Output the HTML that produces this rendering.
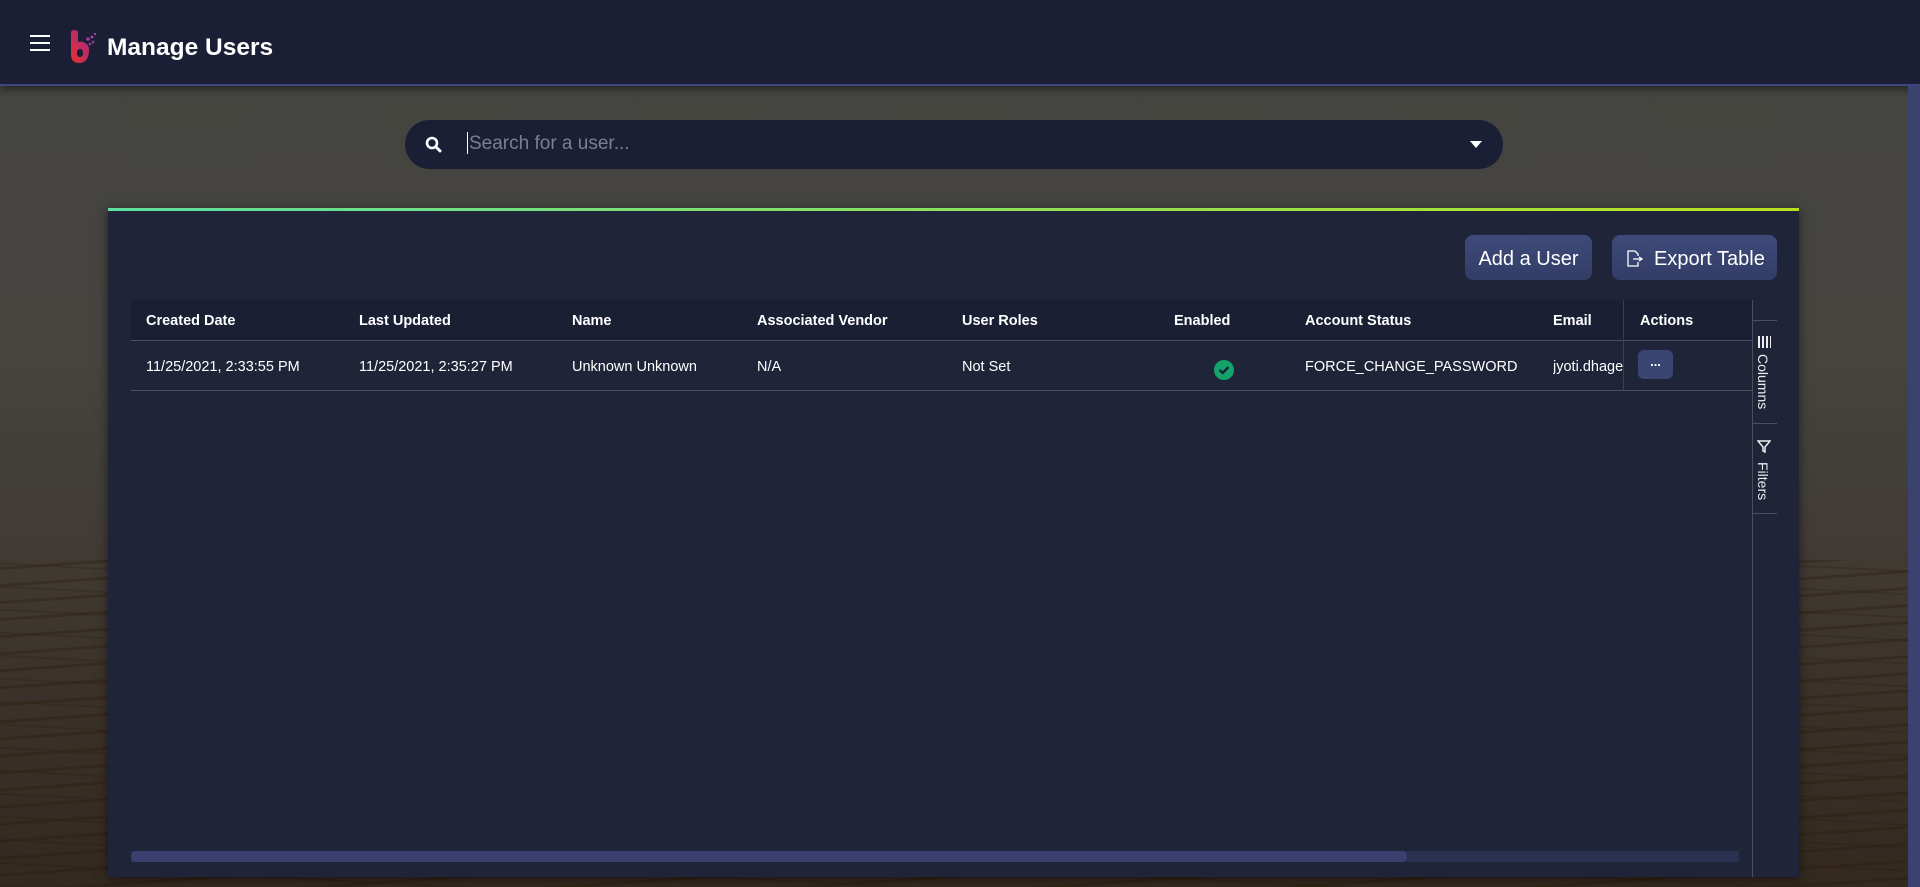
<!DOCTYPE html>
<html><head><meta charset="utf-8"><style>
*{box-sizing:border-box;margin:0;padding:0}
body{width:1920px;height:887px;overflow:hidden;font-family:"Liberation Sans",sans-serif;color:#fff;position:relative;
background:linear-gradient(180deg,#454541 0%,#45443f 40%,#413c35 60%,#3a3129 80%,#33291f 100%);}
.tex{position:absolute;left:0;top:560px;width:1920px;height:327px;opacity:.7;background:repeating-linear-gradient(176deg,rgba(40,25,10,0) 0 7px,rgba(45,28,12,.5) 7px 10px,rgba(0,0,0,0) 10px 17px),repeating-linear-gradient(183deg,rgba(40,25,10,0) 0 11px,rgba(45,28,12,.35) 11px 13px,rgba(0,0,0,0) 13px 23px);}
.hdr{position:absolute;left:0;top:0;width:1920px;height:86px;background:#1b1f35;border-bottom:2px solid #3a4782;box-shadow:0 3px 8px rgba(0,0,0,.5)}
.rbar{position:absolute;right:0;top:86px;width:12px;height:801px;background:#3b4270}
.search{position:absolute;left:405px;top:120px;width:1098px;height:49px;border-radius:25px;background:#1b1f35}
.card{position:absolute;left:108px;top:208px;width:1691px;height:669px;background:#1f2439;box-shadow:0 2px 10px rgba(0,0,0,.5)}
.card:before{content:"";position:absolute;left:0;top:0;width:100%;height:3px;background:linear-gradient(90deg,#5ee0a0,#b9e21e)}
.btn{position:absolute;top:27px;height:45px;border-radius:8px;background:linear-gradient(180deg,#3e4a7a,#323d66);font-size:20px;line-height:49px;color:#fff;white-space:nowrap}
.th{position:absolute;top:300px;height:41px;left:131px;width:1621px;background:#1b1f33;border-bottom:1px solid #4a4e5e}
.tr{position:absolute;top:341px;height:50px;left:131px;width:1621px;border-bottom:1px solid #4a4e5e}
.c{position:absolute;font-size:14.5px;white-space:nowrap}
.th .c{font-weight:bold;top:13px}
.tr .c{top:18px}
.vt{position:absolute;writing-mode:vertical-rl;font-size:14px;color:#eee}
</style></head><body>
<div class="tex"></div>
<div class="hdr">
 <div style="position:absolute;left:30px;top:35px;width:20px;height:2px;background:#fff;box-shadow:0 7px 0 #fff,0 14px 0 #fff"></div>
 <svg style="position:absolute;left:68px;top:30px" width="30" height="35" viewBox="0 0 30 35"><defs><linearGradient id="g" x1="0" y1="1" x2="1" y2="0"><stop offset="0" stop-color="#e8302c"/><stop offset="1" stop-color="#9a2a8c"/></linearGradient></defs><path d="M3 3 Q3 0 6.5 0 Q10 0 10 3 L10 12 Q12 11 15 12 Q22 14 21 22 Q20 33 11 33 Q3 33 3 24 Z M12 19 Q9 19 9 23 Q9 27 12 27 Q15 27 15 23 Q15 19 12 19Z" fill="url(#g)"/><circle cx="20" cy="9" r="1.8" fill="#a33a9a"/><circle cx="24" cy="7" r="1.4" fill="#b04aa8"/><circle cx="25" cy="12" r="1.4" fill="#8a3aa0"/><circle cx="27" cy="4" r="1.1" fill="#b04aa8"/><circle cx="22" cy="14" r="1.3" fill="#9a3898"/></svg>
 <div style="position:absolute;left:107px;top:34px;font-size:24.5px;font-weight:bold">Manage Users</div>
</div>
<div class="rbar"></div>
<div class="search">
 <svg style="position:absolute;left:20px;top:16px" width="17" height="17" viewBox="0 0 17 17"><circle cx="7" cy="7" r="5" fill="none" stroke="#fff" stroke-width="2.6"/><path d="M11 11 L15 15" stroke="#fff" stroke-width="3" stroke-linecap="round"/></svg>
 <div style="position:absolute;left:62px;top:12px;width:1px;height:22px;background:#fff"></div>
 <div style="position:absolute;left:64px;top:13px;font-size:19px;color:#7a7f92">Search for a user...</div>
 <div style="position:absolute;left:1065px;top:21px;border-left:6px solid transparent;border-right:6px solid transparent;border-top:7px solid #fff"></div>
</div>
<div class="card">
 <div class="btn" style="left:1357px;width:127px;text-align:center">Add a User</div>
 <div class="btn" style="left:1504px;width:165px;padding-left:42px">Export Table
  <svg style="position:absolute;left:14px;top:15px" width="20" height="17" viewBox="0 0 20 17"><path d="M9 1 H2 V16 H12 V12 M9 1 L12 4 V6" fill="none" stroke="#fff" stroke-width="1.3"/><path d="M7 9 H15 M13 7 L16 9 L13 11" fill="none" stroke="#fff" stroke-width="1.3"/></svg>
 </div>
</div>
<div class="th">
 <div class="c" style="left:15px">Created Date</div><div class="c" style="left:228px">Last Updated</div><div class="c" style="left:441px">Name</div><div class="c" style="left:626px">Associated Vendor</div><div class="c" style="left:831px">User Roles</div><div class="c" style="left:1043px">Enabled</div><div class="c" style="left:1174px">Account Status</div><div class="c" style="left:1422px">Email</div><div class="c" style="left:1509px">Actions</div>
 <div style="position:absolute;left:1492px;top:0;width:1px;height:41px;background:#3a3e50"></div>
</div>
<div class="tr">
 <div class="c" style="left:15px">11/25/2021, 2:33:55 PM</div><div class="c" style="left:228px">11/25/2021, 2:35:27 PM</div><div class="c" style="left:441px">Unknown Unknown</div><div class="c" style="left:626px">N/A</div><div class="c" style="left:831px">Not Set</div>
 <svg style="position:absolute;left:1083px;top:19px" width="20" height="20" viewBox="0 0 20 20"><circle cx="10" cy="10" r="10" fill="#14a36a"/><path d="M5.5 10 L8.7 13 L14.5 7" fill="none" stroke="#1b1f33" stroke-width="2.4"/></svg>
 <div class="c" style="left:1174px">FORCE_CHANGE_PASSWORD</div>
 <div class="c" style="left:1422px;width:70px;overflow:hidden">jyoti.dhagemail</div>
 <div style="position:absolute;left:1492px;top:0;width:1px;height:49px;background:#3a3e50"></div>
 <div style="position:absolute;left:1507px;top:9px;width:35px;height:29px;border-radius:6px;background:#3a4672;text-align:center;font-size:13px;font-weight:bold;line-height:24px">...</div>
</div>
<div style="position:absolute;left:1752px;top:300px;width:1px;height:577px;background:#4a4e5e"></div>
<div style="position:absolute;left:1752px;top:320px;width:25px;height:1px;background:#4a4e5e"></div>
<div style="position:absolute;left:1752px;top:423px;width:25px;height:1px;background:#4a4e5e"></div>
<div style="position:absolute;left:1752px;top:513px;width:25px;height:1px;background:#4a4e5e"></div>
<div style="position:absolute;left:1758px;top:336px;width:13px;height:12px;background:repeating-linear-gradient(90deg,#eee 0 2px,transparent 2px 4px)"></div>
<div class="vt" style="left:1755px;top:354px">Columns</div>
<svg style="position:absolute;left:1757px;top:440px" width="14" height="13" viewBox="0 0 14 13"><path d="M1 1 H13 L8 7 V12 L6 11 V7 Z" fill="none" stroke="#eee" stroke-width="1.5"/></svg>
<div class="vt" style="left:1755px;top:462px">Filters</div>
<div style="position:absolute;left:131px;top:851px;width:1608px;height:11px;background:#2a3050"></div>
<div style="position:absolute;left:131px;top:851px;width:1276px;height:11px;border-radius:5px;background:#3b4070"></div>
</body></html>
